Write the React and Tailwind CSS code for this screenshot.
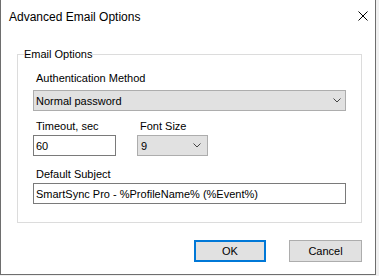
import React from "react";

const Chevron = () => (
  <svg width="8" height="5" viewBox="0 0 8 5" className="block">
    <polyline points="0.5,0.5 4,4 7.5,0.5" fill="none" stroke="#444" strokeWidth="1" />
  </svg>
);

export default function App() {
  return (
    <div className="w-[379px] h-[276px] bg-[#f0f0f0] text-black" style={{ fontFamily: '"Liberation Sans", Arial, sans-serif' }}>
      <div className="w-[376px] h-[275px] bg-white border-x border-b border-[#6e6e6e] flex flex-col">
        <div className="h-[31px] flex items-start justify-between shrink-0">
          <div className="pl-[8px] pt-[10px] text-[12px] leading-[14px]">Advanced Email Options</div>
          <svg width="10" height="10" viewBox="0 0 10 10" className="mt-[11px] mr-[7px]">
            <line x1="0.5" y1="0.5" x2="9.5" y2="9.5" stroke="#000" strokeWidth="1" />
            <line x1="9.5" y1="0.5" x2="0.5" y2="9.5" stroke="#000" strokeWidth="1" />
          </svg>
        </div>
        <fieldset className="mt-[16px] ml-[16px] w-[345px] border border-[#dcdcdc] px-[15px] pt-[10px] pb-[18px] text-[11px] leading-[14px]">
          <legend className="-ml-[9px] p-0 leading-[14px]">Email Options</legend>
          <div className="pl-[3px] h-[14px]">Authentication Method</div>
          <div className="mt-[5px] h-[21px] bg-[#e1e1e1] border border-[#adadad] flex items-center justify-between pl-[2px] pr-[4px]">
            <span>Normal password</span>
            <Chevron />
          </div>
          <div className="mt-[8px] flex gap-[21px]">
            <div className="flex flex-col">
              <div className="pl-[3px] h-[14px]">Timeout, sec</div>
              <div className="mt-[2px] w-[83px] h-[21px] border border-[#7a7a7a] bg-white flex items-center pl-[2px]">60</div>
            </div>
            <div className="flex flex-col">
              <div className="pl-[3px] h-[14px]">Font Size</div>
              <div className="mt-[2px] w-[71px] h-[21px] bg-[#e1e1e1] border border-[#adadad] flex items-center justify-between pl-[3px] pr-[6px]">
                <span>9</span>
                <Chevron />
              </div>
            </div>
          </div>
          <div className="mt-[11px] pl-[3px] h-[14px]">Default Subject</div>
          <div className="mt-[2px] h-[21px] border border-[#7a7a7a] bg-white flex items-center pl-[2px]">
            SmartSync Pro - %ProfileName% (%Event%)
          </div>
        </fieldset>
        <div className="mt-[17px] flex justify-end gap-[23px] pr-[13px] text-[11px]">
          <button className="w-[72px] h-[22px] border-2 border-[#0078d7] bg-[#e1e1e1] flex items-center justify-center">OK</button>
          <button className="w-[73px] h-[22px] border border-[#adadad] bg-[#e1e1e1] flex items-center justify-center">Cancel</button>
        </div>
      </div>
    </div>
  );
}
